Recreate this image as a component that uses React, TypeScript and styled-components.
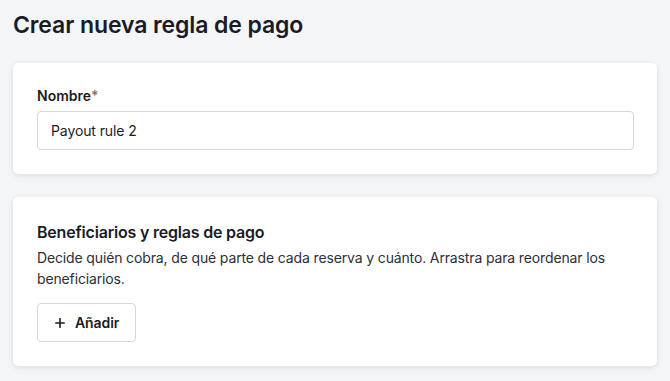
import React from 'react';
import styled, { createGlobalStyle } from 'styled-components';

const GlobalStyle = createGlobalStyle`
    html, body {
        margin: 0;
        padding: 0;
        background: #f4f5f7;
        font-family: Inter, "Noto Sans", sans-serif;
        color: #1b1b25;
    }
`

const Page = styled.div`
    padding: 10px 13px 16px;
    display: flex;
    flex-direction: column;
`

const Title = styled.h1`
    margin: 0 0 23px;
    font-size: 23px;
    line-height: 30px;
    font-weight: 600;
    letter-spacing: -0.1px;
    color: #1b1b25;
`

const Card = styled.section`
    background: #fff;
    border-radius: 5px;
    box-shadow: 0 1px 4px rgba(20, 24, 40, 0.08), 0 2px 8px rgba(20, 24, 40, 0.04);
    padding: 23px 23px 24px 24px;
    margin-bottom: 23px;
`

const Label = styled.label`
    display: block;
    font-size: 14px;
    line-height: 20px;
    font-weight: 600;
    margin-bottom: 5px;

    span {
        color: #9a6b5e;
    }
`

const Input = styled.input`
    box-sizing: border-box;
    width: 100%;
    height: 39px;
    border: 1px solid #d6d6db;
    border-radius: 4px;
    padding: 0 13px;
    font-family: inherit;
    font-size: 14px;
    letter-spacing: -0.1px;
    color: #1b1b25;
    outline: none;
`

const SectionTitle = styled.h2`
    margin: 0 0 3px;
    font-size: 16px;
    line-height: 24px;
    font-weight: 600;
    letter-spacing: -0.2px;
`

const Description = styled.p`
    margin: 0 0 14px;
    font-size: 14px;
    line-height: 21px;
    letter-spacing: -0.14px;
    color: #2e2e38;
`

const Button = styled.button`
    display: inline-flex;
    align-items: center;
    gap: 10px;
    height: 39px;
    padding: 0 16px 0 17px;
    background: #fff;
    border: 1px solid #d6d6db;
    border-radius: 4px;
    font-family: inherit;
    font-size: 14px;
    font-weight: 600;
    letter-spacing: -0.1px;
    color: #1b1b25;
    cursor: pointer;
`

const App: React.FC = () => {
    return (
        <>
        <GlobalStyle />
        <Page>
            <Title>Crear nueva regla de pago</Title>
            <Card>
                <Label htmlFor="nombre">Nombre<span>*</span></Label>
                <Input id="nombre" defaultValue="Payout rule 2" />
            </Card>
            <Card>
                <SectionTitle>Beneficiarios y reglas de pago</SectionTitle>
                <Description>
                    Decide quién cobra, de qué parte de cada reserva y cuánto. Arrastra para reordenar los beneficiarios.
                </Description>
                <Button>
                    <svg width="10" height="10" viewBox="0 0 10 10" fill="none" stroke="#1b1b25" strokeWidth="1.6" strokeLinecap="round">
                        <path d="M5 0.75v8.5M0.75 5h8.5" />
                    </svg>
                    Añadir
                </Button>
            </Card>
        </Page>
        </>
    );
}

export default App;
